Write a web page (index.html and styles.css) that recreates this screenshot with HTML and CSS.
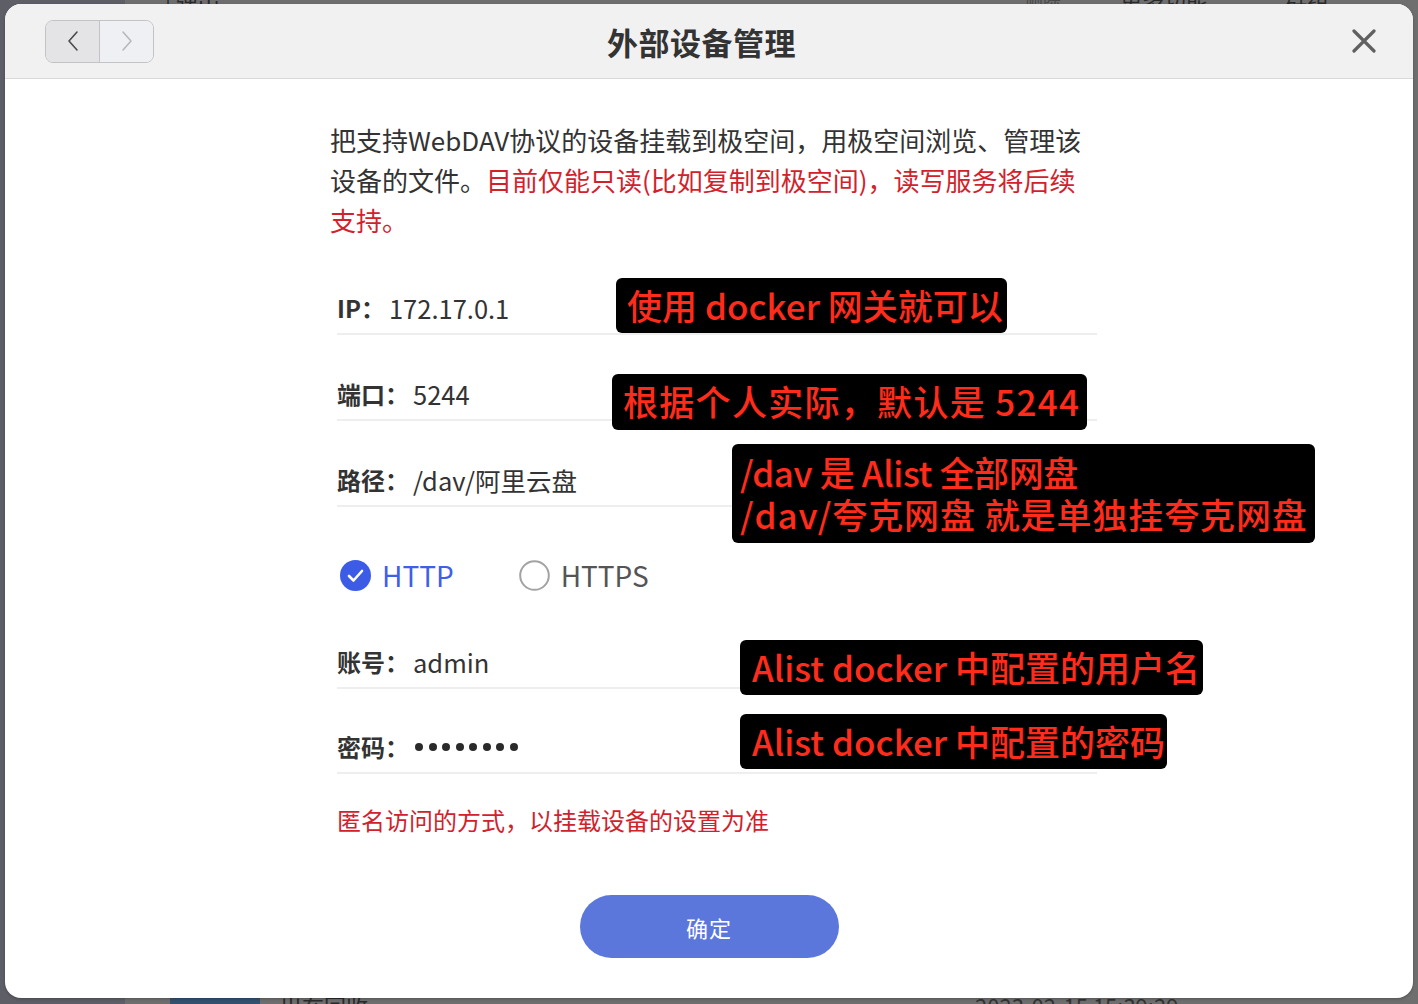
FILE: index.html
```html
<!DOCTYPE html>
<html lang="zh-CN">
<head>
<meta charset="utf-8">
<title>外部设备管理</title>
<link rel="stylesheet" href="styles.css">
</head>
<body>
<div class="desk">
  <aside class="desk-side"></aside>
  <main class="desk-main">
    <div class="desk-top">
      <span class="bg-t1">| 弹出</span>
      <span class="bg-t2">删除</span>
      <span class="bg-t3">更多功能</span>
      <span class="bg-t4">群组</span>
    </div>
    <div class="desk-bottom">
      <span class="bg-thumb"></span>
      <span class="bg-b1">出在回收</span>
      <span class="bg-b2">2023-02-15 15:39:29</span>
      <span class="bg-b3">-</span>
    </div>
  </main>
</div>

<div class="dialog">
  <header class="dlg-head">
    <div class="nav">
      <button class="nav-btn nav-back" aria-label="后退">
        <svg width="14" height="24" viewBox="0 0 14 24"><path d="M11 3 L3 12 L11 21" fill="none" stroke="#4a4a4a" stroke-width="1.6" stroke-linecap="round" stroke-linejoin="round"/></svg>
      </button>
      <button class="nav-btn nav-fwd" aria-label="前进">
        <svg width="14" height="24" viewBox="0 0 14 24"><path d="M3 3 L11 12 L3 21" fill="none" stroke="#b8b8bc" stroke-width="1.6" stroke-linecap="round" stroke-linejoin="round"/></svg>
      </button>
    </div>
    <h1 class="dlg-title">外部设备管理</h1>
    <div class="head-right">
      <button class="close" aria-label="关闭">
        <svg width="24" height="24" viewBox="0 0 24 24"><path d="M2 2 L22 22 M22 2 L2 22" stroke="#606060" stroke-width="3.2" stroke-linecap="round"/></svg>
      </button>
    </div>
  </header>

  <div class="dlg-body">
    <div class="content">
      <p class="intro">把支持WebDAV协议的设备挂载到极空间，用极空间浏览、管理该设备的文件。<span class="warn">目前仅能只读(比如复制到极空间)，读写服务将后续支持。</span></p>

      <div class="form">
        <div class="field first"><span class="lbl">IP：</span><span class="val">172.17.0.1</span></div>
        <div class="field"><span class="lbl">端口：</span><span class="val">5244</span></div>
        <div class="field"><span class="lbl">路径：</span><span class="val">/dav/阿里云盘</span></div>

        <div class="radios">
          <label class="radio checked">
            <span class="dot">
              <svg width="31" height="31" viewBox="0 0 31 31"><circle cx="15.5" cy="15.5" r="15.5" fill="#3d5ce6"/><path d="M9 16 L13.5 20.5 L22 11" fill="none" stroke="#fff" stroke-width="2.6" stroke-linecap="round" stroke-linejoin="round"/></svg>
            </span>
            <span class="rtext">HTTP</span>
          </label>
          <label class="radio">
            <span class="dot">
              <svg width="31" height="31" viewBox="0 0 31 31"><circle cx="15.5" cy="15.5" r="14.3" fill="#fff" stroke="#a3a3a3" stroke-width="2"/></svg>
            </span>
            <span class="rtext">HTTPS</span>
          </label>
        </div>

        <div class="field after-radio"><span class="lbl">账号：</span><span class="val">admin</span></div>
        <div class="field tight"><span class="lbl">密码：</span><span class="val pwd"><i></i><i></i><i></i><i></i><i></i><i></i><i></i><i></i></span></div>

        <p class="note">匿名访问的方式，以挂载设备的设置为准</p>
      </div>
    </div>

    <div class="actions">
      <button class="ok">确定</button>
    </div>
  </div>

  <div class="tip tip1">使用 docker 网关就可以</div>
  <div class="tip tip2">根据个人实际，默认是 5244</div>
  <div class="tip tip3"><span class="tip3-a">/dav 是 Alist 全部网盘</span><br>/dav/夸克网盘 就是单独挂夸克网盘</div>
  <div class="tip tip4">Alist docker 中配置的用户名</div>
  <div class="tip tip5">Alist docker 中配置的密码</div>
</div>
</body>
</html>
```

FILE: styles.css
```css
* { box-sizing: border-box; }

html, body {
  margin: 0;
  padding: 0;
  width: 1418px;
  height: 1004px;
  overflow: hidden;
}

body {
  font-family: "Noto Sans CJK SC", "Noto Sans", sans-serif;
  background: #6c6c6e;
  position: relative;
}

/* background desktop (dimmed) */
.desk {
  display: flex;
  width: 1418px;
  height: 1004px;
}
.desk-side {
  width: 125px;
  background: #5d5e66;
}
.desk-main {
  flex: 1;
  display: flex;
  flex-direction: column;
  justify-content: space-between;
  background: #6e6e6f;
  color: #2a2a2a;
}
.desk-top {
  height: 14px;
  position: relative;
  overflow: hidden;
  font-size: 22px;
  line-height: 22px;
}
.desk-top span, .desk-bottom span {
  position: absolute;
}
.bg-t1 { left: 40px; top: -13px; }
.bg-t2 { left: 900px; top: -13px; color: #4a4a4a; font-size: 18px; }
.bg-t3 { left: 995px; top: -13px; }
.bg-t4 { left: 1160px; top: -13px; }
.desk-bottom {
  height: 10px;
  position: relative;
  overflow: hidden;
  font-size: 22px;
  line-height: 22px;
}
.bg-thumb { left: 45px; top: 2px; width: 90px; height: 20px; background: #33506f; }
.bg-b1 { left: 155px; top: 0; }
.bg-b2 { left: 850px; top: 0; color: #333; }
.bg-b3 { left: 1195px; top: 0; }

/* dialog */
.dialog {
  position: absolute;
  left: 5px;
  top: 4px;
  width: 1408px;
  height: 994px;
  background: #fff;
  border-radius: 16px;
  overflow: hidden;
  box-shadow: 0 1px 3px rgba(0,0,0,0.25);
}

.dlg-head {
  height: 75px;
  background: #f1f1f1;
  border-bottom: 1px solid #d8d8d8;
  display: grid;
  grid-template-columns: 1fr auto 1fr;
  align-items: center;
  padding: 0 37px 0 40px;
}

.nav {
  display: flex;
  width: 109px;
  height: 43px;
  border: 1.5px solid #c3c3c5;
  border-radius: 8px;
  overflow: hidden;
}
.nav-btn {
  flex: 1;
  border: 0;
  padding: 0;
  margin: 0;
  display: flex;
  align-items: center;
  justify-content: center;
}
.nav-back {
  background: #e4e4e7;
  border-right: 1.5px solid #c3c3c5;
}
.nav-fwd {
  background: #eff0f3;
}

.dlg-title {
  margin: 0 0 0 -18px;
  font-size: 31px;
  font-weight: 700;
  color: #333;
  letter-spacing: 0.5px;
}

.head-right {
  display: flex;
  justify-content: flex-end;
}
.close {
  border: 0;
  background: transparent;
  padding: 0;
  width: 24px;
  height: 24px;
  display: flex;
}

.dlg-body {
  padding-top: 41px;
}

.content {
  margin-left: 325px;
  width: 770px;
}

.intro {
  margin: 0;
  font-size: 26px;
  line-height: 40px;
  color: #333;
}
.warn { color: #d1222c; }

.form {
  margin-top: 51px;
  padding-left: 7px;
  width: 767px;
}

.field {
  margin-top: 42px;
  padding-bottom: 8px;
  border-bottom: 2px solid #eeeeee;
  font-size: 24px;
  line-height: 34px;
  color: #333;
  display: flex;
  align-items: center;
}
.field.first { margin-top: 0; }
.field.after-radio { margin-top: 54px; }
.field.tight { margin-top: 41px; }

.lbl {
  font-weight: 700;
  color: #333;
}
.val {
  color: #333;
  font-size: 25.5px;
  margin-left: 4px;
}

.pwd {
  display: flex;
  gap: 5.5px;
  align-items: center;
  height: 34px;
  margin-left: 6px;
}
.pwd i {
  width: 8px;
  height: 8px;
  border-radius: 50%;
  background: #2a2a2a;
}

.radios {
  margin-top: 52px;
  display: flex;
  gap: 65px;
  height: 32px;
  padding-left: 3px;
}
.radio {
  display: flex;
  align-items: center;
  gap: 11px;
  font-size: 28px;
  line-height: 32px;
  color: #555;
}
.radio .dot { display: flex; }
.radio.checked .rtext { color: #3f5fe8; }

.note {
  margin: 30px 0 0;
  font-size: 24px;
  line-height: 32px;
  color: #d1222c;
}

.actions {
  margin-top: 59px;
  display: flex;
  justify-content: center;
}
.ok {
  width: 259px;
  height: 63px;
  border: 0;
  border-radius: 32px;
  background: #5b77dc;
  color: #fff;
  font-family: "Noto Sans CJK SC", sans-serif;
  font-size: 22px;
  letter-spacing: 1px;
}

/* annotation overlays */
.tip {
  position: absolute;
  background: #000;
  color: #ff2b1b;
  border-radius: 6px;
  font-size: 35px;
  font-weight: 500;
  line-height: 53px;
  padding-left: 11px;
  white-space: nowrap;
}
.tip1 { left: 611px; top: 274px; width: 391px; height: 55px; }
.tip2 { left: 607px; top: 370px; width: 475px; height: 56px; letter-spacing: 1.3px; }
.tip3 { left: 727px; top: 440px; width: 583px; height: 99px; line-height: 42px; padding-top: 7px; padding-left: 8px; letter-spacing: 0.9px; }
.tip3-a { letter-spacing: -0.4px; }
.tip4 { left: 735px; top: 636px; width: 463px; height: 55px; padding-left: 12px; }
.tip5 { left: 735px; top: 710px; width: 427px; height: 55px; padding-left: 12px; }
```
